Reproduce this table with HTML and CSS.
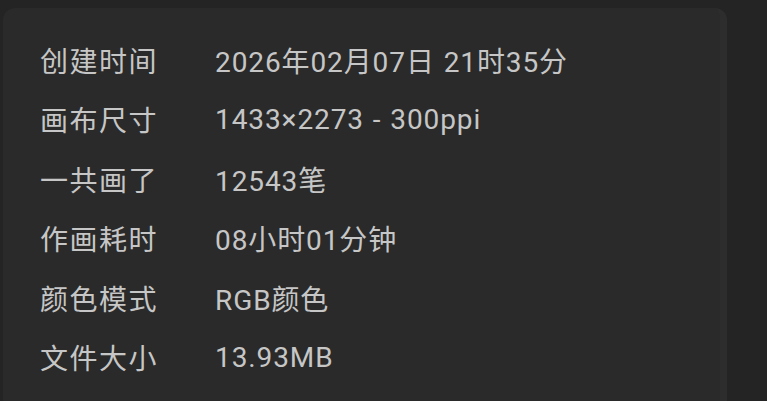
FILE: index.html
```html
<!DOCTYPE html>
<html lang="zh-CN">
<head>
    <meta charset="UTF-8">
    <meta name="viewport" content="width=device-width, initial-scale=1.0">
    <title>作品信息</title>
    <link rel="stylesheet" href="styles.css">
</head>
<body>

    <div class="card">
        <!-- 作品信息 -->
        <div class="row"><span class="label">创建时间</span><span class="value">2026年02月07日 21时35分</span></div>
        <div class="row"><span class="label">画布尺寸</span><span class="value">1433×2273 - 300ppi</span></div>
        <div class="row"><span class="label">一共画了</span><span class="value">12543笔</span></div>
        <div class="row"><span class="label">作画耗时</span><span class="value">08小时01分钟</span></div>
        <div class="row"><span class="label">颜色模式</span><span class="value">RGB颜色</span></div>
        <div class="row"><span class="label">文件大小</span><span class="value">13.93MB</span></div>
    </div>

</body>
</html>
```

FILE: styles.css
```css
/* Estilos generales */
body {
    margin: 0;
    background: #242424;
    font-family: Roboto, "Noto Sans CJK SC", sans-serif;
    color: #c6c6c6;
    overflow: hidden;
}

.card {
    margin: 8px 0 0 3px;
    width: 724px;
    height: 420px;
    background: #2a2a2a;
    border-radius: 12px;
    border-right: 7px solid #2d2d2d;
    padding: 22px 0 0 37px;
    box-sizing: border-box;
}

.row {
    display: flex;
    align-items: center;
    height: 59.5px;
    font-size: 28px;
}

.label {
    width: 175px;
    letter-spacing: 1.5px;
}

.value {
    letter-spacing: 0.9px;
    word-spacing: 1px;
}
```
